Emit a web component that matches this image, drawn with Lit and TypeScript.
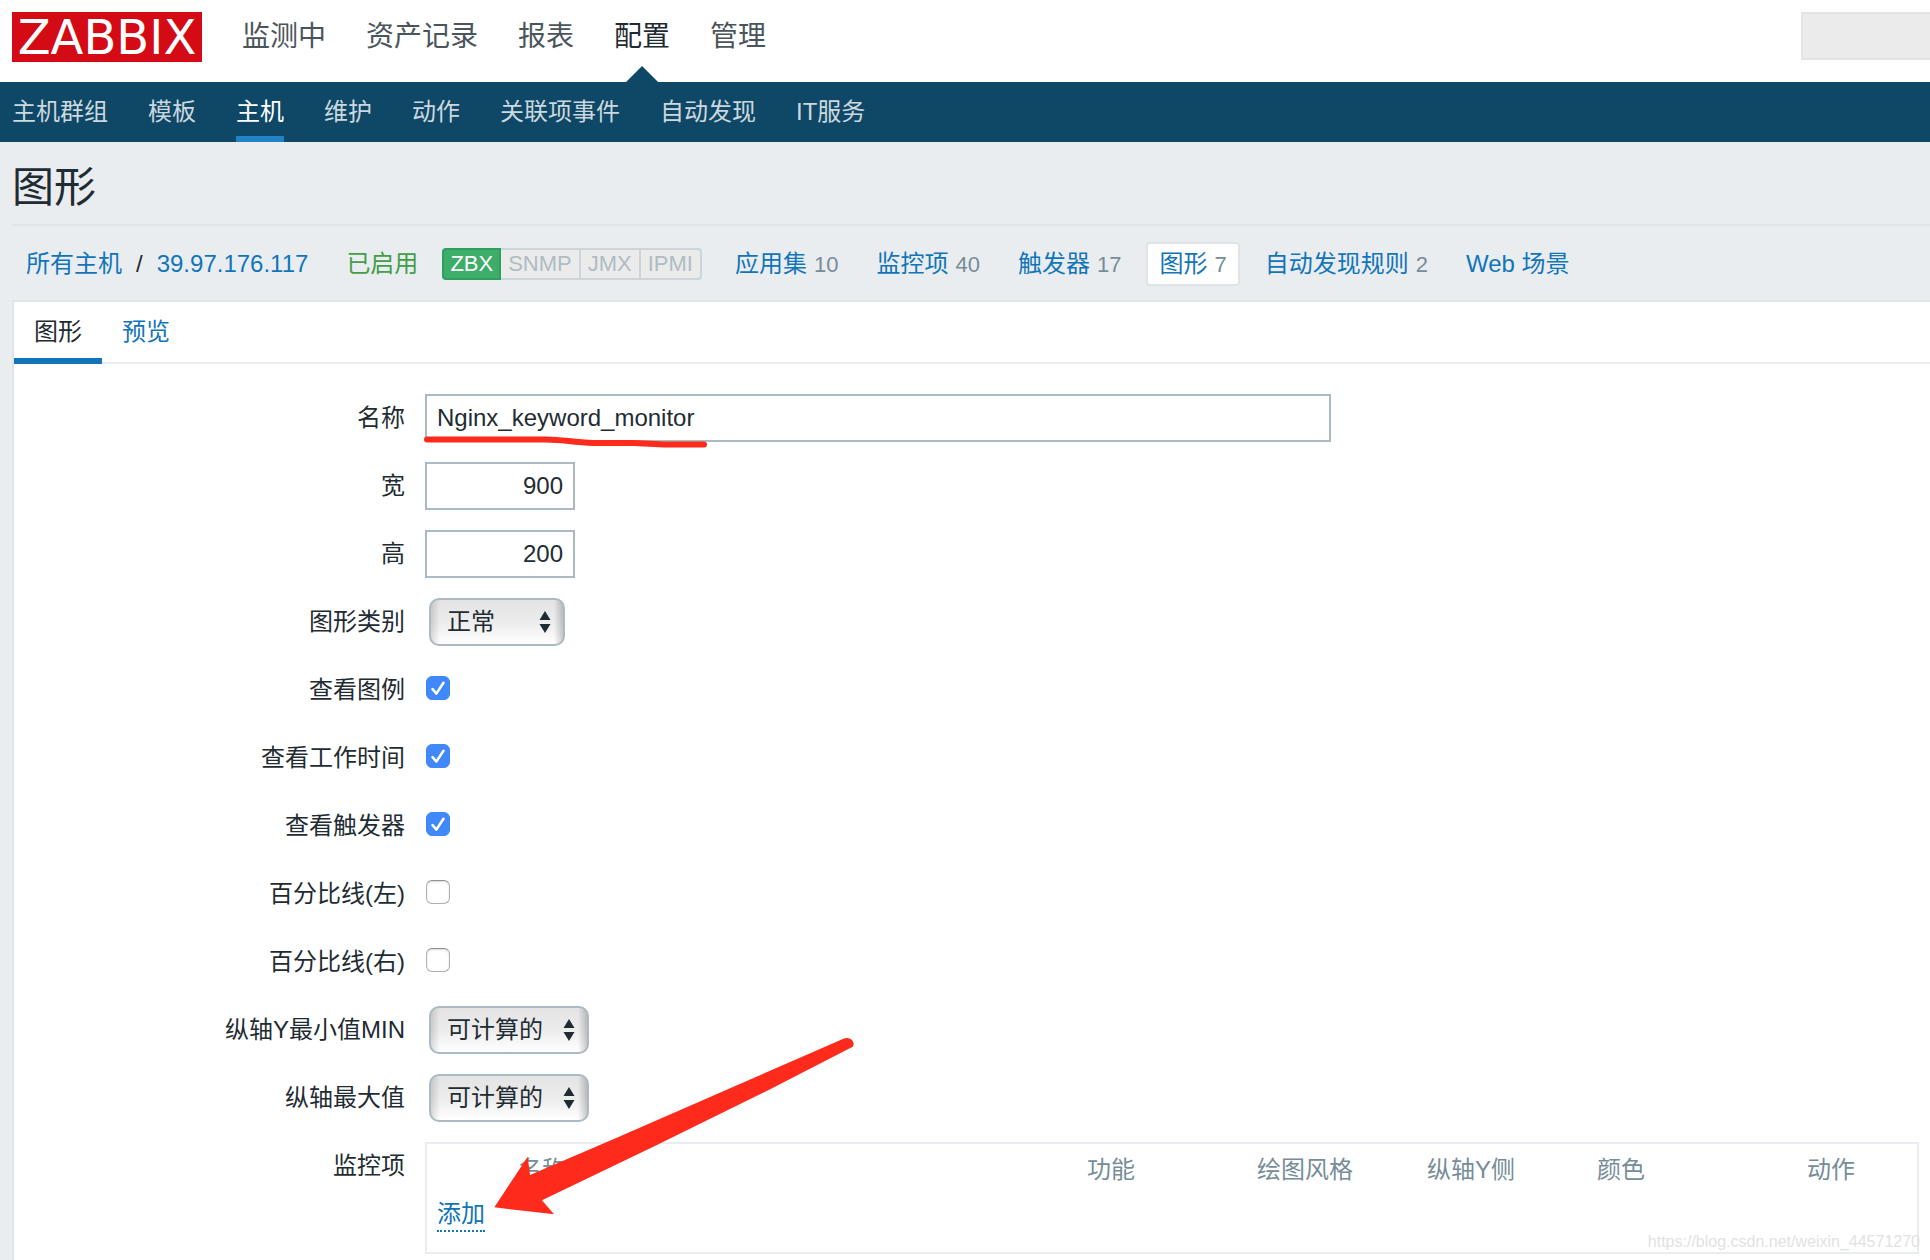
import { LitElement, html, css, nothing } from "lit";
import { customElement, property } from "lit/decorators.js";
import { classMap } from "lit/directives/class-map.js";

const shared = css`
  * {
    box-sizing: border-box;
  }
  a {
    color: #1275b8;
    text-decoration: none;
  }
`;

@customElement("zbx-check")
class ZbxCheck extends LitElement {
  @property() label = "";
  @property({ type: Boolean }) checked = false;

  static styles = [
    shared,
    css`
      :host {
        display: block;
      }
      .row {
        display: grid;
        grid-template-columns: 391px 1fr;
        column-gap: 21px;
        min-height: 48px;
        align-items: center;
      }
      .label {
        text-align: right;
      }
      .box {
        display: grid;
        width: 24px;
        height: 24px;
        margin-bottom: 4px;
      }
      .input,
      .tick {
        grid-area: 1 / 1;
        width: 24px;
        height: 24px;
        margin: 0;
      }
      .input {
        appearance: none;
        border: 1px solid #b0b0b0;
        border-top-color: #8f8f8f;
        border-radius: 6px;
        background: #fff;
        box-shadow: inset 0 1px 2px #d8d8d8;
      }
      .input:checked {
        border-color: #3f87fb;
        background: #4189fb;
        box-shadow: none;
      }
      .tick {
        pointer-events: none;
      }
    `,
  ];

  render() {
    return html`
      <div class="row">
        <label class="label" for="check">${this.label}</label>
        <span class="box">
          <input class="input" id="check" type="checkbox" .checked=${this.checked} @change=${this.toggle} />
          ${this.checked
            ? html`<svg class="tick" viewBox="0 0 24 24" aria-hidden="true">
                <path d="M6.5 13.2 L10.4 17.6 L17.5 6.8" fill="none" stroke="#2f6fd8" stroke-opacity=".5" stroke-width="2.6" stroke-linecap="round" stroke-linejoin="round" transform="translate(0 1)" />
                <path d="M6.5 13.2 L10.4 17.6 L17.5 6.8" fill="none" stroke="#fff" stroke-width="2.6" stroke-linecap="round" stroke-linejoin="round" />
              </svg>`
            : nothing}
        </span>
      </div>
    `;
  }

  private toggle(e: Event) {
    this.checked = (e.target as HTMLInputElement).checked;
  }
}

@customElement("zbx-select")
class ZbxSelect extends LitElement {
  @property() label = "";
  @property({ attribute: false }) options: string[] = [];

  static styles = [
    shared,
    css`
      :host {
        display: block;
      }
      .row {
        display: grid;
        grid-template-columns: 391px 1fr;
        column-gap: 24px;
        min-height: 48px;
        align-items: center;
      }
      .label {
        text-align: right;
      }
      .wrap {
        display: inline-grid;
        justify-self: start;
        align-items: center;
      }
      .select {
        grid-area: 1 / 1;
        appearance: none;
        min-width: 136px;
        height: 48px;
        margin: 0;
        padding: 0 44px 0 16px;
        border: 2px solid #acbbc2;
        border-radius: 10px;
        background:
          linear-gradient(90deg, #0002, #0000 9px),
          linear-gradient(270deg, #0003, #0000 9px),
          linear-gradient(#e4e4e4, #ececec 50%, #fff);
        color: #1f2c33;
        font: inherit;
      }
      .arrows {
        grid-area: 1 / 1;
        justify-self: end;
        width: 12px;
        height: 22px;
        margin-right: 14px;
        pointer-events: none;
      }
    `,
  ];

  render() {
    return html`
      <div class="row">
        <label class="label" for="select">${this.label}</label>
        <span class="wrap">
          <select class="select" id="select">
            ${this.options.map((o) => html`<option>${o}</option>`)}
          </select>
          <svg class="arrows" viewBox="0 0 12 22" aria-hidden="true">
            <path d="M6 0 L11.5 9 H0.5 Z M0.5 13 H11.5 L6 22 Z" fill="#1f2c33" />
          </svg>
        </span>
      </div>
    `;
  }
}

@customElement("app-root")
class AppRoot extends LitElement {
  private menu = ["监测中", "资产记录", "报表", "配置", "管理"];
  private submenu = ["主机群组", "模板", "主机", "维护", "动作", "关联项事件", "自动发现", "IT服务"];
  private agents = ["ZBX", "SNMP", "JMX", "IPMI"];
  private objects: [string, string][] = [
    ["应用集", "10"],
    ["监控项", "40"],
    ["触发器", "17"],
    ["图形", "7"],
    ["自动发现规则", "2"],
    ["Web 场景", ""],
  ];
  private columns = ["", "名称", "功能", "绘图风格", "纵轴Y侧", "颜色", "动作"];

  static styles = [
    shared,
    css`
      :host {
        display: block;
        position: relative;
        overflow: hidden;
        background: #e9edf0;
        color: #1f2c33;
        font: 24px/32px "Liberation Sans", "Noto Sans CJK SC", sans-serif;
      }
      .top {
        display: flex;
        align-items: flex-start;
        height: 82px;
        padding: 12px 0 0 12px;
        background: #fff;
      }
      .logo {
        width: 190px;
        height: 50px;
        background: #d40a14;
        color: #fff;
        font: 48px/50px "DejaVu Sans", sans-serif;
        text-align: center;
      }
      .menu {
        display: flex;
        gap: 40px;
        margin-left: 40px;
        font-size: 28px;
        line-height: 50px;
      }
      .menu-link {
        display: flex;
        flex-direction: column;
        align-items: center;
        height: 70px;
        color: #4a555b;
      }
      .menu-link.active {
        color: #1f2c33;
      }
      .menu-link.active::after {
        content: "";
        width: 32px;
        height: 16px;
        margin-top: auto;
        background: #0f4866;
        clip-path: polygon(50% 0, 100% 100%, 0 100%);
      }
      .search {
        width: 129px;
        height: 48px;
        margin-left: auto;
        border: 2px solid #e4e4e4;
        border-right: 0;
        border-radius: 0;
        background: #ebebeb;
        font: inherit;
      }
      .sub {
        display: flex;
        gap: 40px;
        height: 60px;
        padding: 0 12px;
        background: #0f4866;
        line-height: 60px;
      }
      .sub-link {
        height: 60px;
        color: #ccd8df;
      }
      .sub-link.active {
        border-bottom: 6px solid #1f83c6;
        color: #fff;
      }
      .title {
        margin: 0 0 0 12px;
        height: 84px;
        border-bottom: 2px solid #dfe4e7;
        font-size: 42px;
        line-height: 92px;
        font-weight: 400;
      }
      .objects {
        display: flex;
        align-items: center;
        height: 74px;
        padding: 2px 0 0 26px;
        white-space: nowrap;
      }
      .slash {
        margin: 0 14px;
      }
      .enabled {
        margin: 0 24px 0 38px;
        color: #429e47;
      }
      .agents {
        display: flex;
        margin-right: 20px;
      }
      .agent {
        height: 32px;
        padding: 0 7px;
        border: 2px solid #ccd5da;
        border-left-width: 0;
        background: #ebebeb;
        color: #afbcc3;
        font-size: 22px;
        line-height: 28px;
      }
      .agent.on {
        padding: 0 6px;
        border: 2px solid #2f9f5e;
        border-radius: 4px 0 0 4px;
        background: #3dad69;
        color: #fff;
      }
      .agent:last-child {
        border-radius: 0 4px 4px 0;
      }
      .object-list {
        display: flex;
        gap: 12px;
      }
      .object {
        height: 44px;
        padding: 0 11px;
        border: 2px solid transparent;
        border-radius: 4px;
        line-height: 40px;
      }
      .object.active {
        border-color: #dfe4e7;
        background: #fff;
      }
      .count {
        margin-left: 7px;
        color: #768d99;
        font-size: 22px;
      }
      .panel {
        margin-left: 12px;
        padding-bottom: 6px;
        border: solid #dfe4e7;
        border-width: 2px 0 0 2px;
        background: #fff;
      }
      .tabs {
        display: flex;
        height: 62px;
        border-bottom: 2px solid #e9edf0;
      }
      .tab {
        height: 62px;
        padding: 0 20px;
        border-bottom: 6px solid transparent;
        line-height: 60px;
      }
      .tab.active {
        border-color: #1275b8;
        color: #1f2c33;
      }
      .form {
        display: grid;
        gap: 20px;
        padding: 30px 11px 0 0;
      }
      .row {
        display: grid;
        grid-template-columns: 391px 1fr;
        column-gap: 20px;
        align-items: center;
      }
      .row.top-aligned {
        align-items: start;
      }
      .label {
        text-align: right;
      }
      .top-aligned .label {
        line-height: 48px;
      }
      .text {
        height: 48px;
        padding: 0 10px;
        border: 2px solid #acbbc2;
        border-radius: 0;
        background: #fff;
        color: #1f2c33;
        font: inherit;
      }
      .text.wide {
        width: min(906px, 100%);
      }
      .text.number {
        width: 150px;
        text-align: right;
      }
      .items {
        height: 112px;
        border: 2px solid #e9edf0;
      }
      .table {
        width: 100%;
        table-layout: fixed;
        border-collapse: collapse;
      }
      .head {
        height: 52px;
        padding: 0 0 0 10px;
        color: #768d99;
        font-weight: 400;
        text-align: left;
      }
      .head:nth-child(1) {
        width: 81px;
      }
      .head:nth-child(3),
      .head:nth-child(4),
      .head:nth-child(5) {
        width: 170px;
      }
      .head:nth-child(6) {
        width: 210px;
      }
      .head:nth-child(7) {
        width: 120px;
      }
      .cell {
        padding: 2px 10px 0;
      }
      .add {
        display: block;
        width: fit-content;
        padding: 0;
        border: 0;
        border-bottom: 2px dotted #1275b8;
        background: none;
        color: #1275b8;
        font: inherit;
      }
      .overlay {
        position: absolute;
        pointer-events: none;
      }
      .underline {
        left: 422px;
        top: 434px;
        width: 290px;
        height: 16px;
      }
      .arrow {
        left: 490px;
        top: 1030px;
        width: 370px;
        height: 190px;
      }
      .watermark {
        right: 10px;
        bottom: 6px;
        color: #e2e2e2;
        font-size: 16px;
        line-height: 24px;
      }
    `,
  ];

  render() {
    return html`
      <header>
        <div class="top">
          <a class="logo" href="#">ZABBIX</a>
          <nav class="menu">
            ${this.menu.map(
              (m) => html`<a class=${classMap({ "menu-link": true, active: m === "配置" })} href="#">${m}</a>`
            )}
          </nav>
          <input class="search" type="text" disabled />
        </div>
        <nav class="sub">
          ${this.submenu.map(
            (m) => html`<a class=${classMap({ "sub-link": true, active: m === "主机" })} href="#">${m}</a>`
          )}
        </nav>
      </header>
      <main>
        <h1 class="title">图形</h1>
        <div class="objects">
          <a href="#">所有主机</a><span class="slash">/</span><a href="#">39.97.176.117</a>
          <span class="enabled">已启用</span>
          <div class="agents">
            ${this.agents.map((a) => html`<span class=${classMap({ agent: true, on: a === "ZBX" })}>${a}</span>`)}
          </div>
          <nav class="object-list">
            ${this.objects.map(
              ([name, count]) => html`<span class=${classMap({ object: true, active: name === "图形" })}
                ><a href="#">${name}</a>${count ? html`<span class="count">${count}</span>` : nothing}</span
              >`
            )}
          </nav>
        </div>
        <section class="panel">
          <nav class="tabs">
            <a class="tab active" href="#">图形</a>
            <a class="tab" href="#">预览</a>
          </nav>
          <form class="form">
            <div class="row">
              <label class="label" for="name">名称</label>
              <input class="text wide" id="name" type="text" value="Nginx_keyword_monitor" spellcheck="false" />
            </div>
            <div class="row">
              <label class="label" for="width">宽</label>
              <input class="text number" id="width" type="text" value="900" />
            </div>
            <div class="row">
              <label class="label" for="height">高</label>
              <input class="text number" id="height" type="text" value="200" />
            </div>
            <zbx-select label="图形类别" .options=${["正常"]}></zbx-select>
            <zbx-check label="查看图例" checked></zbx-check>
            <zbx-check label="查看工作时间" checked></zbx-check>
            <zbx-check label="查看触发器" checked></zbx-check>
            <zbx-check label="百分比线(左)"></zbx-check>
            <zbx-check label="百分比线(右)"></zbx-check>
            <zbx-select label="纵轴Y最小值MIN" .options=${["可计算的"]}></zbx-select>
            <zbx-select label="纵轴最大值" .options=${["可计算的"]}></zbx-select>
            <div class="row top-aligned">
              <span class="label" id="items-label">监控项</span>
              <div class="items">
                <table class="table" aria-labelledby="items-label">
                  <thead>
                    <tr>
                      ${this.columns.map((c) => html`<th class="head">${c}</th>`)}
                    </tr>
                  </thead>
                  <tbody>
                    <tr>
                      <td class="cell" colspan="7"><button class="add" type="button">添加</button></td>
                    </tr>
                  </tbody>
                </table>
              </div>
            </div>
          </form>
        </section>
      </main>
      <svg class="overlay underline" viewBox="0 0 290 16" aria-hidden="true">
        <path d="M5 5.5 H124 C142 5.5 150 8.5 172 9 H212 L242 10.5 H282" fill="none" stroke="#fe2b1d" stroke-width="6" stroke-linecap="round" stroke-linejoin="round" />
      </svg>
      <svg class="overlay arrow" viewBox="0 0 370 190" aria-hidden="true">
        <path d="M4.3 177.3 L37.7 126.7 L40 145 L123.3 109.3 L256.7 51 L354 8.500 C360 6 366 12 362.700 16.700 L276.7 61 L163.3 116.7 L52 170.300 L64 184.300 Z" fill="#fe2b1d" />
      </svg>
      <div class="overlay watermark">https://blog.csdn.net/weixin_44571270</div>
    `;
  }
}
